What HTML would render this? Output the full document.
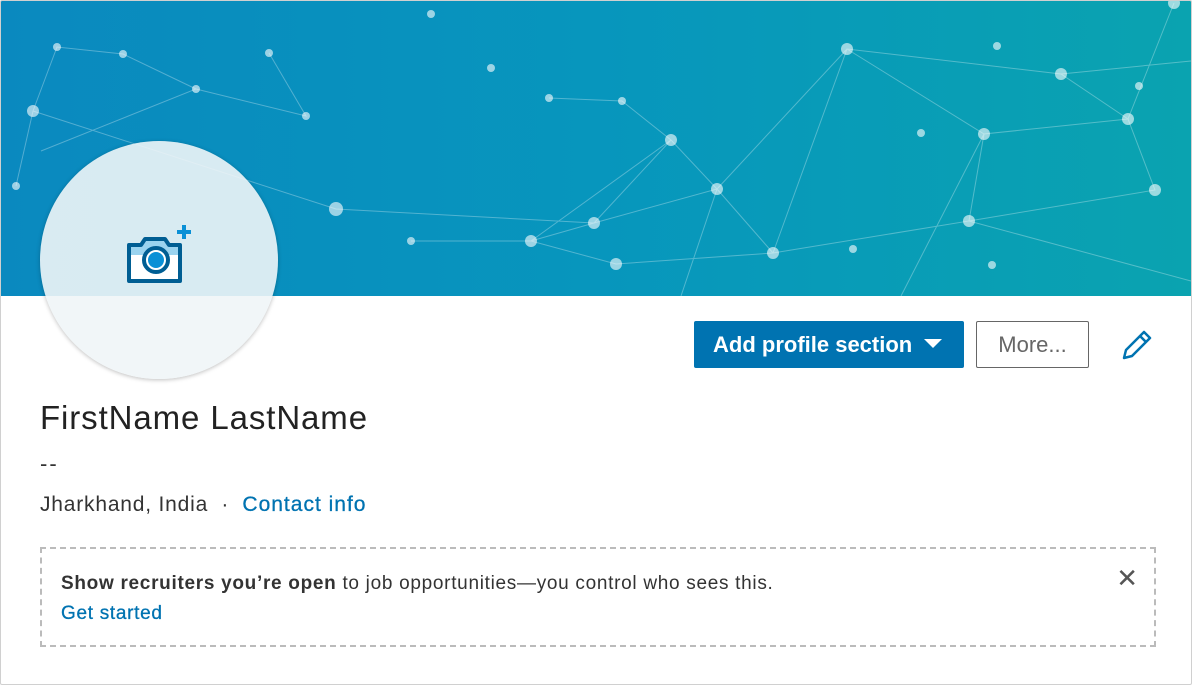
<!DOCTYPE html>
<html><head><style>
body{margin:0;background:#fff;font-family:"Liberation Sans",sans-serif;}
.card{position:relative;width:1190px;height:683px;border:1px solid #d0d0d0;border-radius:2px;overflow:hidden;background:#fff;}
.banner{position:absolute;left:0;top:0;width:1190px;height:295px;background:linear-gradient(90deg,#0a89bf 0%,#0796bd 50%,#0aa3b0 100%);}
.avatar{position:absolute;left:39px;top:140px;width:238px;height:238px;border-radius:50%;background:rgba(240,245,247,0.9);box-shadow:0 1px 4px rgba(0,0,0,.25);}
.btn1{position:absolute;left:693px;top:320px;width:270px;height:47px;background:#0073b1;border-radius:2px;color:#fff;font-weight:bold;font-size:22px;line-height:47px;box-sizing:border-box;padding-left:19px;}
.btn2{position:absolute;left:975px;top:320px;width:113px;height:47px;border:1px solid #666;border-radius:2px;box-sizing:border-box;color:#666;font-size:22px;line-height:45px;text-align:center;}
.name{position:absolute;left:39px;top:398px;font-size:33px;color:#222;letter-spacing:0.9px;}
.dash{position:absolute;left:39px;top:450px;font-size:22px;color:#333;letter-spacing:2px;}
.loc{position:absolute;left:39px;top:492px;font-size:21px;color:#333;letter-spacing:0.8px;}
.loc a{color:#0073b1;font-weight:normal;text-decoration:none;letter-spacing:1px;-webkit-text-stroke:0.3px #0073b1;}
.box{position:absolute;left:39px;top:546px;width:1116px;height:100px;border:2px dashed #bbb;box-sizing:border-box;}
.box .t{position:absolute;left:19px;top:24px;font-size:19px;color:#333;letter-spacing:0.7px;}
.box .g{position:absolute;left:19px;top:54px;font-size:19px;color:#0073b1;letter-spacing:0.7px;-webkit-text-stroke:0.3px #0073b1;}
.x{position:absolute;right:16px;top:14px;font-size:26px;color:#555;}
</style></head><body>
<div class="card">
<div class="banner">
<svg width="1190" height="295" style="position:absolute;left:0;top:0">
<g stroke="rgba(255,255,255,0.3)" stroke-width="1" fill="none">
<path d="M32 110 L56 46 L122 53 L195 88 L305 115 L268 52 M32 110 L335 208 L593 222 L670 139 L716 188 L593 222 L530 240 L615 263 L772 252 L968 220 L983 133 L1127 118 L1060 73 L846 48 L716 188 M846 48 L772 252 M983 133 L846 48 M968 220 L1154 189 L1127 118 M1173 2 L1127 118 M530 240 L670 139 M32 110 L15 185 M122 53 L195 88 L40 150 M716 188 L772 252 M548 97 L621 100 L670 139 M1060 73 L1190 60 M968 220 L1190 280 M410 240 L530 240 M716 188 L680 295 M983 133 L900 295"/>
</g>
<g fill="rgba(255,255,255,0.6)">
<circle cx="32" cy="110" r="6"/><circle cx="56" cy="46" r="4"/><circle cx="122" cy="53" r="4"/><circle cx="195" cy="88" r="4"/><circle cx="305" cy="115" r="4"/><circle cx="268" cy="52" r="4"/><circle cx="335" cy="208" r="7"/><circle cx="593" cy="222" r="6"/><circle cx="670" cy="139" r="6"/><circle cx="716" cy="188" r="6"/><circle cx="530" cy="240" r="6"/><circle cx="615" cy="263" r="6"/><circle cx="772" cy="252" r="6"/><circle cx="968" cy="220" r="6"/><circle cx="983" cy="133" r="6"/><circle cx="1127" cy="118" r="6"/><circle cx="1060" cy="73" r="6"/><circle cx="846" cy="48" r="6"/><circle cx="1154" cy="189" r="6"/><circle cx="1173" cy="2" r="6"/><circle cx="548" cy="97" r="4"/><circle cx="621" cy="100" r="4"/><circle cx="490" cy="67" r="4"/><circle cx="430" cy="13" r="4"/><circle cx="15" cy="185" r="4"/><circle cx="410" cy="240" r="4"/><circle cx="920" cy="132" r="4"/><circle cx="1138" cy="85" r="4"/><circle cx="996" cy="45" r="4"/><circle cx="852" cy="248" r="4"/><circle cx="991" cy="264" r="4"/>
</g>
</svg>
</div>
<div class="avatar">
<svg width="70" height="66" viewBox="0 0 70 66" style="position:absolute;left:86px;top:78px">
<path d="M3 26 h12 l4 -6 h20 l4 6 h11 v10 h-51z" fill="#9ad3ef"/>
<path d="M3 36 h51 v26 h-51z" fill="#fff"/>
<path d="M3 26 h12 l4 -6 h20 l4 6 h11 v36 h-51z" fill="none" stroke="#005e93" stroke-width="4" stroke-linejoin="round"/>
<circle cx="30" cy="41" r="12" fill="#fff" stroke="#005e93" stroke-width="4"/>
<circle cx="30" cy="41" r="8" fill="#0a90d6"/>
<path d="M58 6 v14 M51 13 h14" stroke="#0a90d6" stroke-width="4"/>
</svg>
</div>
<div class="btn1">Add profile section <span style="display:inline-block;width:0;height:0;border-left:9px solid transparent;border-right:9px solid transparent;border-top:9px solid #fff;vertical-align:middle;margin-left:6px;position:relative;top:-3px"></span></div>
<div class="btn2">More...</div>
<svg width="34" height="34" viewBox="0 0 34 34" style="position:absolute;left:1119px;top:327px"><path d="M4 30 l2 -8 L24 4 l6 6 L12 28 z M20 8 l6 6" fill="none" stroke="#0073b1" stroke-width="2.5" stroke-linejoin="round"/></svg>
<div class="name">FirstName LastName</div>
<div class="dash">--</div>
<div class="loc">Jharkhand, India &nbsp;·&nbsp; <a>Contact info</a></div>
<div class="box"><div class="t"><b>Show recruiters you’re open</b> to job opportunities—you control who sees this.</div><div class="g">Get started</div><div class="x">✕</div></div>
</div>
</body></html>
